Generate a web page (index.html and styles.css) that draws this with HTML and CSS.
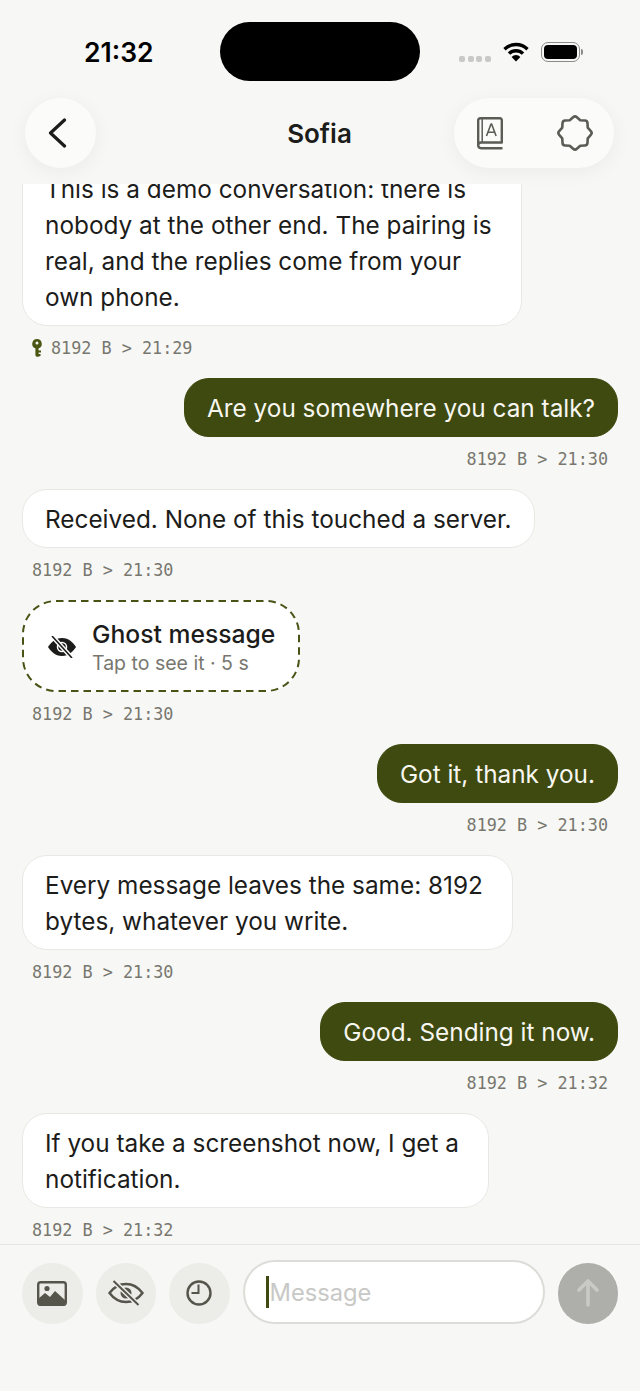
FILE: index.html
```html
<!DOCTYPE html>
<html lang="en">
<head>
    <meta charset="UTF-8">
    <meta name="viewport" content="width=device-width, initial-scale=1.0">
    <title>Sofia</title>
    <link rel="stylesheet" href="styles.css">
</head>
<body>
    <div class="app">
        <div class="status-bar">
            <span class="clock">21:32</span>
            <div class="island"></div>
            <div class="status-icons">
                <div class="dots"><i></i><i></i><i></i><i></i></div>
                <svg class="wifi" width="26" height="20" viewBox="0 0 26 20">
                    <path d="M1.5 7.2a16.5 16.5 0 0 1 23 0" fill="none" stroke="#000" stroke-width="3.4"/>
                    <path d="M6 11.6a10 10 0 0 1 14 0" fill="none" stroke="#000" stroke-width="3.4"/>
                    <path d="M13 19.5l-4.4-4.6a6.2 6.2 0 0 1 8.8 0z" fill="#000"/>
                </svg>
                <div class="battery"><div class="battery-fill"></div></div>
                <div class="battery-tip"></div>
            </div>
        </div>

        <div class="header">
            <div class="header-side">
                <button class="back-btn">
                    <svg width="20" height="30" viewBox="0 0 20 30">
                        <path d="M16.500 2L2.500 15l14 13" fill="none" stroke="#1c1c1a" stroke-width="3.200" stroke-linecap="round" stroke-linejoin="round"/>
                    </svg>
                </button>
            </div>
            <div class="title">Sofia</div>
            <div class="header-side right">
                <div class="header-actions">
                    <svg width="26" height="33" viewBox="0 0 26 33" fill="none" stroke="#5c5c56" stroke-width="2.400" stroke-linejoin="round">
                        <path d="M1.200 28V3.500A2.300 2.300 0 0 1 3.500 1.200h19.500a1.800 1.800 0 0 1 1.800 1.800v22.500H4A2.800 2.800 0 0 0 1.200 28.300 2.900 2.900 0 0 0 4.100 31.200H25.500"/>
                        <path d="M5.200 1.500v24" stroke-width="1.500"/>
                        <path d="M9.500 19L14 7h.6l4.500 12M11 15.200h6.600" stroke-width="1.600"/>
                    </svg>
                    <svg width="38" height="38" viewBox="-19 -19 38 38" fill="none" stroke="#5c5c56" stroke-width="2.600" stroke-linejoin="round">
                        <path d="M-1.850-15.800Q0-17.500 1.850-15.800L5.280-12.750 9.860-12.480Q12.370-12.370 12.480-9.860L12.750-5.280 15.800-1.850Q17.500 0 15.800 1.850L12.750 5.280 12.480 9.860Q12.370 12.370 9.860 12.480L5.280 12.750 1.850 15.800Q0 17.500-1.850 15.800L-5.280 12.750-9.860 12.480Q-12.370 12.370-12.480 9.860L-12.750 5.280-15.800 1.850Q-17.500 0-15.800-1.850L-12.750-5.280-12.480-9.860Q-12.370-12.370-9.860-12.480L-5.280-12.750Z"/>
                    </svg>
                </div>
            </div>
        </div>

        <div class="messages">
            <div class="msg in">
                <div class="bubble wrapped">This is a demo conversation: there is<br>nobody at the other end. The pairing is<br>real, and the replies come from your<br>own phone.</div>
                <div class="meta">
                    <svg width="10" height="18" viewBox="0 0 10 18">
                        <path d="M5 0a4.800 4.800 0 0 1 1.600 9.300V11.500H9V13.500H6.600V15H8.500V17L5 18 3.400 16.500V9.300A4.800 4.800 0 0 1 5 0zM5 2.500a1.500 1.500 0 1 0 0 3 1.500 1.500 0 0 0 0-3z" fill="#4b5612" fill-rule="evenodd"/>
                    </svg>
                    8192 B &gt; 21:29
                </div>
            </div>
            <div class="msg out">
                <div class="bubble">Are you somewhere you can talk?</div>
                <div class="meta">8192 B &gt; 21:30</div>
            </div>
            <div class="msg in">
                <div class="bubble">Received. None of this touched a server.</div>
                <div class="meta">8192 B &gt; 21:30</div>
            </div>
            <div class="msg in">
                <div class="ghost">
                    <svg class="ghost-border" width="278" height="92" viewBox="0 0 278 92">
                        <rect x="1" y="1" width="276" height="90" rx="33" fill="none" stroke="#4b5215" stroke-width="2" stroke-dasharray="7.500 5"/>
                    </svg>
                    <svg width="30" height="22" viewBox="0 0 30 22">
                        <path d="M15 2C8 2 3.500 7 1 11c2.500 4 7 9 14 9s11.500-5 14-9C26.500 7 22 2 15 2z" fill="#1c1c1a"/>
                        <circle cx="15" cy="11" r="4.500" fill="none" stroke="#fff" stroke-width="1.500"/>
                        <path d="M5 0l20 22" stroke="#fff" stroke-width="4.500"/>
                        <path d="M5 0l20 22" stroke="#1c1c1a" stroke-width="1.600"/>
                    </svg>
                    <div>
                        <div class="ghost-title">Ghost message</div>
                        <div class="ghost-sub">Tap to see it · 5 s</div>
                    </div>
                </div>
                <div class="meta">8192 B &gt; 21:30</div>
            </div>
            <div class="msg out">
                <div class="bubble">Got it, thank you.</div>
                <div class="meta">8192 B &gt; 21:30</div>
            </div>
            <div class="msg in">
                <div class="bubble wrapped">Every message leaves the same: 8192<br>bytes, whatever you write.</div>
                <div class="meta">8192 B &gt; 21:30</div>
            </div>
            <div class="msg out">
                <div class="bubble">Good. Sending it now.</div>
                <div class="meta">8192 B &gt; 21:32</div>
            </div>
            <div class="msg in">
                <div class="bubble wrapped">If you take a screenshot now, I get a<br>notification.</div>
                <div class="meta">8192 B &gt; 21:32</div>
            </div>
        </div>

        <div class="composer">
            <button class="tool-btn">
                <svg width="30" height="25" viewBox="0 0 30 25">
                    <rect x="1.200" y="1.200" width="27.600" height="22.600" rx="2.500" fill="none" stroke="#55554c" stroke-width="2.400"/>
                    <path d="M1 23V18l7-6 5 4 5-6 11 10v3a1.500 1.500 0 0 1-1.500 1.500H2.500A1.500 1.500 0 0 1 1 23z" fill="#55554c"/>
                    <circle cx="10" cy="7.500" r="2.600" fill="#55554c"/>
                </svg>
            </button>
            <button class="tool-btn">
                <svg width="36" height="26" viewBox="0 0 36 26" fill="none" stroke="#55554c" stroke-width="2.400">
                    <path d="M18 4C10 4 4.500 9 1.500 13c3 4 8.500 9 16.500 9s13.500-5 16.500-9C31.500 9 26 4 18 4z"/>
                    <circle cx="18" cy="13" r="5.500" fill="#55554c" stroke="none"/>
                    <path d="M5.500 1l25 24" stroke="#ecece8" stroke-width="5"/>
                    <path d="M5.500 1l25 24" stroke-width="2"/>
                </svg>
            </button>
            <button class="tool-btn">
                <svg width="26" height="26" viewBox="0 0 26 26" fill="none" stroke="#55554c" stroke-width="2.400">
                    <circle cx="13" cy="13" r="11.500"/>
                    <path d="M12.500 4.500v8.500H5.500" stroke-width="2"/>
                </svg>
            </button>
            <div class="field">
                <span class="caret"></span>
                <span class="placeholder">Message</span>
            </div>
            <button class="send-btn">
                <svg width="24" height="30" viewBox="0 0 24 30" fill="none" stroke="#c9c9c6" stroke-width="3.600" stroke-linecap="round" stroke-linejoin="round">
                    <path d="M12 27V3M3 12l9-9 9 9"/>
                </svg>
            </button>
        </div>
    </div>
</body>
</html>
```

FILE: styles.css
```css
html, body {
    margin: 0;
    padding: 0;
}
body {
    font-family: Inter, "Noto Sans", sans-serif;
    background: #f7f7f5;
    color: #1c1c1a;
}
button {
    border: none;
    padding: 0;
    cursor: pointer;
}
.app {
    width: 640px;
    height: 1391px;
    display: flex;
    flex-direction: column;
    overflow: hidden;
}

/* status bar */
.status-bar {
    height: 98px;
    flex-shrink: 0;
    padding: 22px 56px 0 84px;
    box-sizing: border-box;
    display: flex;
    align-items: flex-start;
}
.clock {
    width: 136px;
    margin-top: 13px;
    font-size: 26.500px;
    font-weight: 600;
    line-height: 34px;
    color: #000;
}
.island {
    width: 200px;
    height: 59px;
    border-radius: 30px;
    background: #000;
}
.status-icons {
    margin-left: 39px;
    margin-top: 20px;
    display: flex;
    align-items: center;
}
.dots {
    display: flex;
    gap: 2.500px;
    margin-top: 14px;
}
.dots i {
    width: 6px;
    height: 6px;
    border-radius: 2px;
    background: #c9c9c7;
}
.wifi {
    margin-left: 12px;
}
.battery {
    margin-left: 12px;
    padding: 2px;
    border: 1.500px solid #8a8a88;
    border-radius: 7px;
    width: 33px;
    height: 14px;
}
.battery-fill {
    width: 100%;
    height: 100%;
    background: #000;
    border-radius: 4px;
}
.battery-tip {
    width: 2px;
    height: 6px;
    margin-left: 1px;
    background: #8a8a88;
    border-radius: 0 2px 2px 0;
}

/* header */
.header {
    height: 70px;
    flex-shrink: 0;
    padding: 0 26px 0 25px;
    display: grid;
    grid-template-columns: 1fr auto 1fr;
    align-items: center;
    margin-bottom: 16px;
}
.header-side {
    display: flex;
}
.header-side.right {
    justify-content: flex-end;
}
.back-btn {
    width: 71px;
    height: 70px;
    border-radius: 50%;
    background: #fbfbf9;
    box-shadow: 0 4px 20px rgba(0, 0, 0, 0.05);
    display: flex;
    align-items: center;
    justify-content: center;
    padding-right: 6px;
    box-sizing: border-box;
}
.title {
    font-size: 26px;
    font-weight: 600;
}
.header-actions {
    width: 160px;
    height: 70px;
    border-radius: 35px;
    background: #fbfbf9;
    box-shadow: 0 4px 20px rgba(0, 0, 0, 0.05);
    display: flex;
    align-items: center;
    justify-content: space-between;
    padding: 0 20px 0 23px;
    box-sizing: border-box;
}

/* messages */
.messages {
    flex: 1;
    min-height: 0;
    overflow: hidden;
    padding: 0 22px 4px;
    display: flex;
    flex-direction: column;
    justify-content: flex-end;
    gap: 20px;
}
.msg {
    display: flex;
    flex-direction: column;
    flex-shrink: 0;
}
.msg.in {
    align-items: flex-start;
}
.msg.out {
    align-items: flex-end;
}
.bubble {
    padding: 10.500px 22px;
    border-radius: 25px;
    font-size: 24.350px;
    line-height: 36px;
}
.bubble.wrapped {
    padding-right: 29px;
}
.in .bubble {
    background: #fff;
    border: 1px solid #e8e8e4;
}
.out .bubble {
    background: #3f4a10;
    color: #f7f7f0;
    border: 1px solid #3f4a10;
}
.meta {
    margin: 12px 10px 0;
    height: 20px;
    display: flex;
    align-items: center;
    gap: 9px;
    font-family: "DejaVu Sans Mono", monospace;
    font-size: 16.800px;
    line-height: 20px;
    color: #77776f;
}
.ghost {
    position: relative;
    width: 278px;
    height: 92px;
    box-sizing: border-box;
    padding: 2px 0 0 25px;
    display: flex;
    align-items: center;
    gap: 15px;
    background: #fff;
    border-radius: 34px;
}
.ghost-border {
    position: absolute;
    top: 0;
    left: 0;
}
.ghost-title {
    font-size: 24.700px;
    font-weight: 500;
    line-height: 31px;
}
.ghost-sub {
    font-size: 19.500px;
    line-height: 26px;
    color: #77776f;
}

/* composer */
.composer {
    height: 147px;
    flex-shrink: 0;
    box-sizing: border-box;
    border-top: 1px solid #e6e6e2;
    padding: 15px 22px 0;
    display: flex;
    align-items: flex-start;
    gap: 13px;
}
.tool-btn, .send-btn {
    width: 60.500px;
    height: 60.500px;
    margin-top: 3px;
    border-radius: 50%;
    background: #ecece8;
    display: flex;
    align-items: center;
    justify-content: center;
    flex-shrink: 0;
}
.send-btn {
    background: #aeaeaa;
}
.field {
    flex: 1;
    height: 64px;
    box-sizing: border-box;
    border: 2px solid #dcdcd8;
    border-radius: 32px;
    background: #fff;
    padding-left: 21px;
    display: flex;
    align-items: center;
}
.caret {
    width: 3px;
    height: 32px;
    background: #3f4a10;
    flex-shrink: 0;
}
.placeholder {
    margin-left: 1px;
    font-size: 23.700px;
    color: #c8c8c6;
}
```
